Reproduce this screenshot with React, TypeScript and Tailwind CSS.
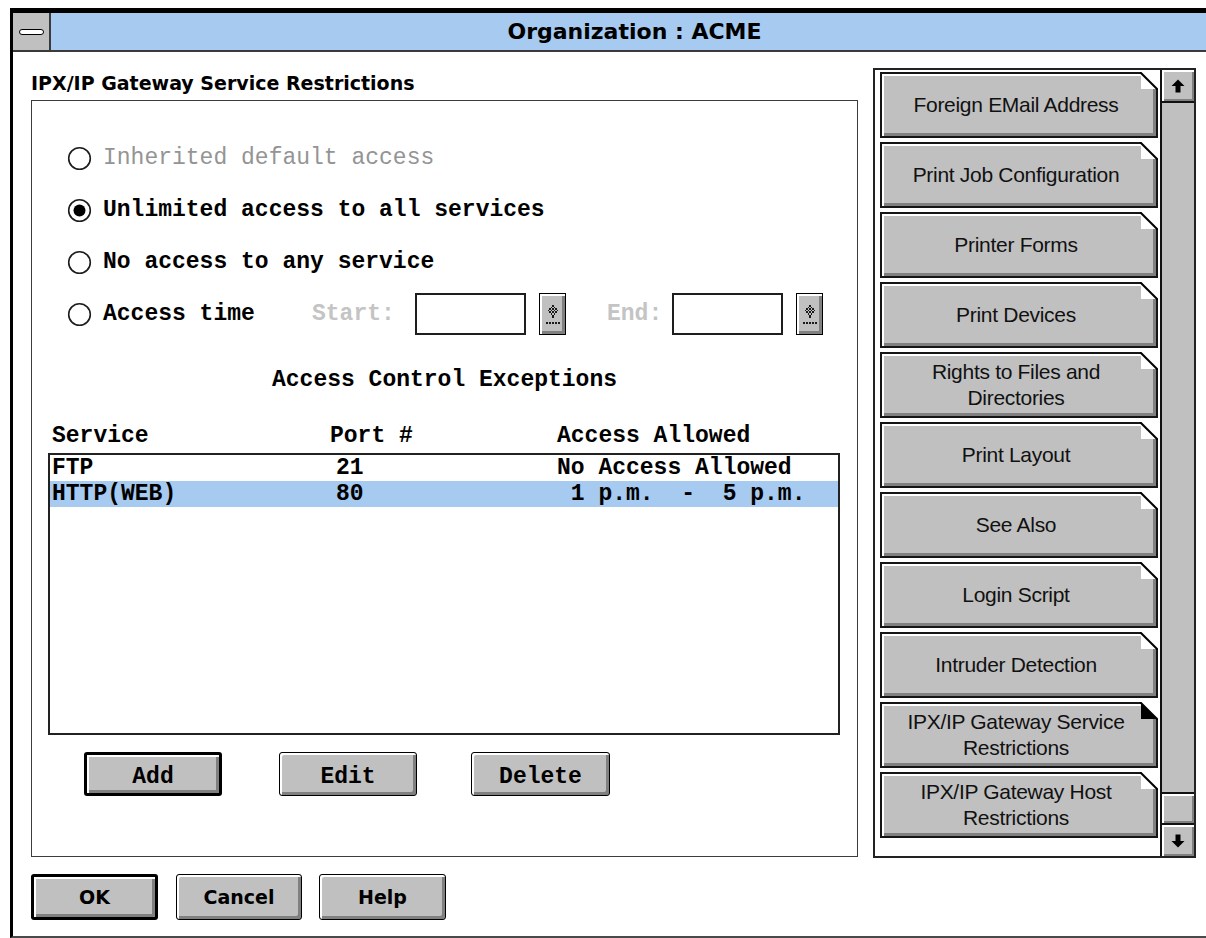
import React from 'react';

type Tab = { label: string[]; selected?: boolean };

const tabs: Tab[] = [
  { label: ['Foreign EMail Address'] },
  { label: ['Print Job Configuration'] },
  { label: ['Printer Forms'] },
  { label: ['Print Devices'] },
  { label: ['Rights to Files and', 'Directories'] },
  { label: ['Print Layout'] },
  { label: ['See Also'] },
  { label: ['Login Script'] },
  { label: ['Intruder Detection'] },
  { label: ['IPX/IP Gateway Service', 'Restrictions'], selected: true },
  { label: ['IPX/IP Gateway Host', 'Restrictions'] },
];

const exceptions = [
  { service: 'FTP', port: '21', access: 'No Access Allowed', active: false },
  { service: 'HTTP(WEB)', port: '80', access: ' 1 p.m.  -  5 p.m.', active: true },
];

function Radio({ checked }: { checked?: boolean }) {
  return (
    <svg width="25" height="25" viewBox="0 0 25 25" className="shrink-0">
      <circle cx="12.5" cy="12.5" r="10.8" fill="#fff" stroke="#1c1c1c" strokeWidth="1.6" />
      {checked && <circle cx="12.5" cy="12.5" r="6" fill="#000" />}
    </svg>
  );
}

// dotted "pick" glyph used on the time spinners
function PickGlyph() {
  const dots: [number, number][] = [
    [4, 0], [3, 1], [5, 1], [2, 2], [4, 2], [6, 2], [1, 3], [3, 3], [5, 3], [7, 3],
    [2, 4], [4, 4], [6, 4], [3, 5], [5, 5], [4, 6], [4, 7],
    [0, 11], [2, 11], [4, 11], [6, 11], [8, 11],
  ];
  return (
    <svg width="14" height="19" viewBox="0 0 9 12" shapeRendering="crispEdges">
      {dots.map(([x, y], i) => (
        <rect key={i} x={x} y={y} width="1" height="1" fill="#1a1a1a" />
      ))}
    </svg>
  );
}

function Arrow({ down }: { down?: boolean }) {
  return (
    <svg width="14" height="14" viewBox="0 0 14 14" className={down ? 'rotate-180' : ''}>
      <polygon points="7,0.5 13.5,7 9.5,7 9.5,13.5 4.5,13.5 4.5,7 0.5,7" fill="#000" />
    </svg>
  );
}

function Button({ label, isDefault, className }: { label: string; isDefault?: boolean; className: string }) {
  return (
    <div
      className={`${isDefault ? 'border-[3px]' : 'border'} border-black rounded-[3px] bg-[#c0c0c0] shadow-[inset_2px_2px_0_#fff,inset_-3px_-3px_0_#808080] flex items-center justify-center text-black ${className}`}
    >
      {label}
    </div>
  );
}

function TabButton({ tab }: { tab: Tab }) {
  return (
    <div className="relative h-[66px] w-[278px] shrink-0 border-2 border-[#151515] bg-[#c0c0c0] shadow-[inset_2px_2px_0_#fff,inset_-3px_-3px_0_#808080] flex flex-col items-center justify-center font-['Liberation_Sans',Arial,sans-serif] text-[21px] leading-[26px] text-[#111] tracking-[-0.3px] pr-[6px]">
      {tab.label.map((line) => (
        <span key={line} className="whitespace-nowrap">
          {line}
        </span>
      ))}
      {/* folded corner */}
      <svg width="18" height="18" viewBox="0 0 18 18" className="absolute -top-[2px] -right-[2px]">
        <polygon points="0,0 18,0 18,18" fill="#fff" />
        <polygon points="1,1 17,17 1,17" fill={tab.selected ? '#000' : '#fff'} />
        <line x1="0" y1="0" x2="18" y2="18" stroke="#000" strokeWidth="2" />
      </svg>
    </div>
  );
}

function TimeBox() {
  return <div className="w-[111px] h-[42px] border-2 border-[#1e1e1e] bg-white shrink-0" />;
}

function Spinner() {
  return (
    <div className="w-[27px] h-[42px] shrink-0 border-[1.5px] border-black bg-[#c0c0c0] shadow-[inset_2px_2px_0_#fff,inset_-3px_-3px_0_#808080] flex items-center justify-center">
      <PickGlyph />
    </div>
  );
}

export default function App() {
  return (
    <div className="w-[1206px] h-[938px] bg-white overflow-hidden pt-[8px] pl-[10px]">
      <div className="h-[930px] flex flex-col border-l-[3px] border-t-[5px] border-b-2 border-l-black border-t-black border-b-[#4a4a4a]">
        {/* caption */}
        <div className="h-[39px] shrink-0 flex bg-[#a6caf0] border-b-2 border-[#3a3a3a]">
          <div className="w-[38px] bg-[#c0c0c0] border-r-2 border-[#3a3a3a] flex items-center justify-center">
            <div className="w-[25px] h-[6px] bg-white border-[1.5px] border-black rounded-full" />
          </div>
          <div className="flex-1 flex items-center justify-center pl-[12px] font-['DejaVu_Sans',Verdana,sans-serif] font-bold text-[22px] text-black">
            Organization : ACME
          </div>
        </div>

        <div className="flex flex-1">
          {/* page */}
          <div className="w-[860px] shrink-0 pl-[18px] flex flex-col">
            <div className="h-[48px] pt-[20px] font-['DejaVu_Sans',Verdana,sans-serif] font-bold text-[19px] leading-[22px] text-black whitespace-nowrap">
              IPX/IP Gateway Service Restrictions
            </div>

            <div className="w-[827px] h-[757px] border border-[#3c3c3c] flex flex-col font-['Liberation_Mono','Courier_New',monospace] font-bold text-[23px] leading-[26px] text-black">
              <div className="pt-[31px] pl-[35px] flex flex-col">
                <div className="h-[52px] flex items-center gap-[11px]">
                  <Radio />
                  <span className="text-[#949494] font-normal">Inherited default access</span>
                </div>
                <div className="h-[52px] flex items-center gap-[11px]">
                  <Radio checked />
                  <span>Unlimited access to all services</span>
                </div>
                <div className="h-[52px] flex items-center gap-[11px]">
                  <Radio />
                  <span>No access to any service</span>
                </div>
                <div className="h-[52px] flex items-center gap-[11px]">
                  <Radio />
                  <span className="w-[209px] shrink-0">Access time</span>
                  <span className="w-[92px] shrink-0 -ml-[11px] text-[#c4c4c4]">Start:</span>
                  <TimeBox />
                  <div className="ml-[2px]">
                    <Spinner />
                  </div>
                  <span className="w-[65px] shrink-0 ml-[30px] text-[#c4c4c4]">End:</span>
                  <div className="-ml-[11px]">
                    <TimeBox />
                  </div>
                  <div className="ml-[2px]">
                    <Spinner />
                  </div>
                </div>
              </div>

              <div className="h-[40px] mt-[20px] flex items-center justify-center">Access Control Exceptions</div>

              <div className="mt-[22px] h-[28px] pl-[20px] flex items-center">
                <span className="w-[278px] shrink-0">Service</span>
                <span className="w-[227px] shrink-0">Port #</span>
                <span>Access Allowed</span>
              </div>

              <div className="mt-[3px] ml-[16px] w-[792px] h-[282px] border-2 border-[#222] bg-white flex flex-col">
                {exceptions.map((row) => (
                  <div
                    key={row.service}
                    className={`h-[26px] pl-[2px] flex items-center ${row.active ? 'bg-[#a6caf0]' : ''}`}
                  >
                    <span className="w-[284px] shrink-0">{row.service}</span>
                    <span className="w-[221px] shrink-0">{row.port}</span>
                    <span className="whitespace-pre">{row.access}</span>
                  </div>
                ))}
              </div>

              <div className="mt-[17px] ml-[52px] flex gap-[57px]">
                <Button label="Add" isDefault className="w-[138px] h-[44px] pt-[5px]" />
                <Button label="Edit" className="w-[138px] h-[44px] pt-[5px]" />
                <Button label="Delete" className="w-[139px] h-[44px] pt-[5px] -ml-[3px]" />
              </div>
            </div>

            <div className="mt-[17px] flex gap-[18px] font-['DejaVu_Sans',Verdana,sans-serif] font-bold text-[19px]">
              <Button label="OK" isDefault className="w-[127px] h-[46px]" />
              <Button label="Cancel" className="w-[126px] h-[46px]" />
              <Button label="Help" className="w-[127px] h-[46px] -ml-[1px]" />
            </div>
          </div>

          {/* page selector */}
          <div className="mt-[16px] w-[323px] h-[790px] shrink-0 border-2 border-[#222] bg-white flex">
            <div className="w-[285px] pl-[5px] pt-[2px] flex flex-col gap-[4px] overflow-hidden">
              {tabs.map((t) => (
                <TabButton key={t.label.join(' ')} tab={t} />
              ))}
            </div>
            <div className="flex-1 border-l-2 border-[#111] bg-[#c0c0c0] flex flex-col">
              <div className="h-[33px] border-b-2 border-[#111] bg-[#c0c0c0] shadow-[inset_2px_2px_0_#fff,inset_-2px_-2px_0_#808080] flex items-center justify-center">
                <Arrow />
              </div>
              <div className="flex-1" />
              <div className="h-[31px] border-t-2 border-[#111] bg-[#c0c0c0] shadow-[inset_2px_2px_0_#fff,inset_-2px_-2px_0_#808080]" />
              <div className="h-[33px] border-t-2 border-[#111] bg-[#c0c0c0] shadow-[inset_2px_2px_0_#fff,inset_-2px_-2px_0_#808080] flex items-center justify-center">
                <Arrow down />
              </div>
            </div>
          </div>
        </div>
      </div>
    </div>
  );
}
